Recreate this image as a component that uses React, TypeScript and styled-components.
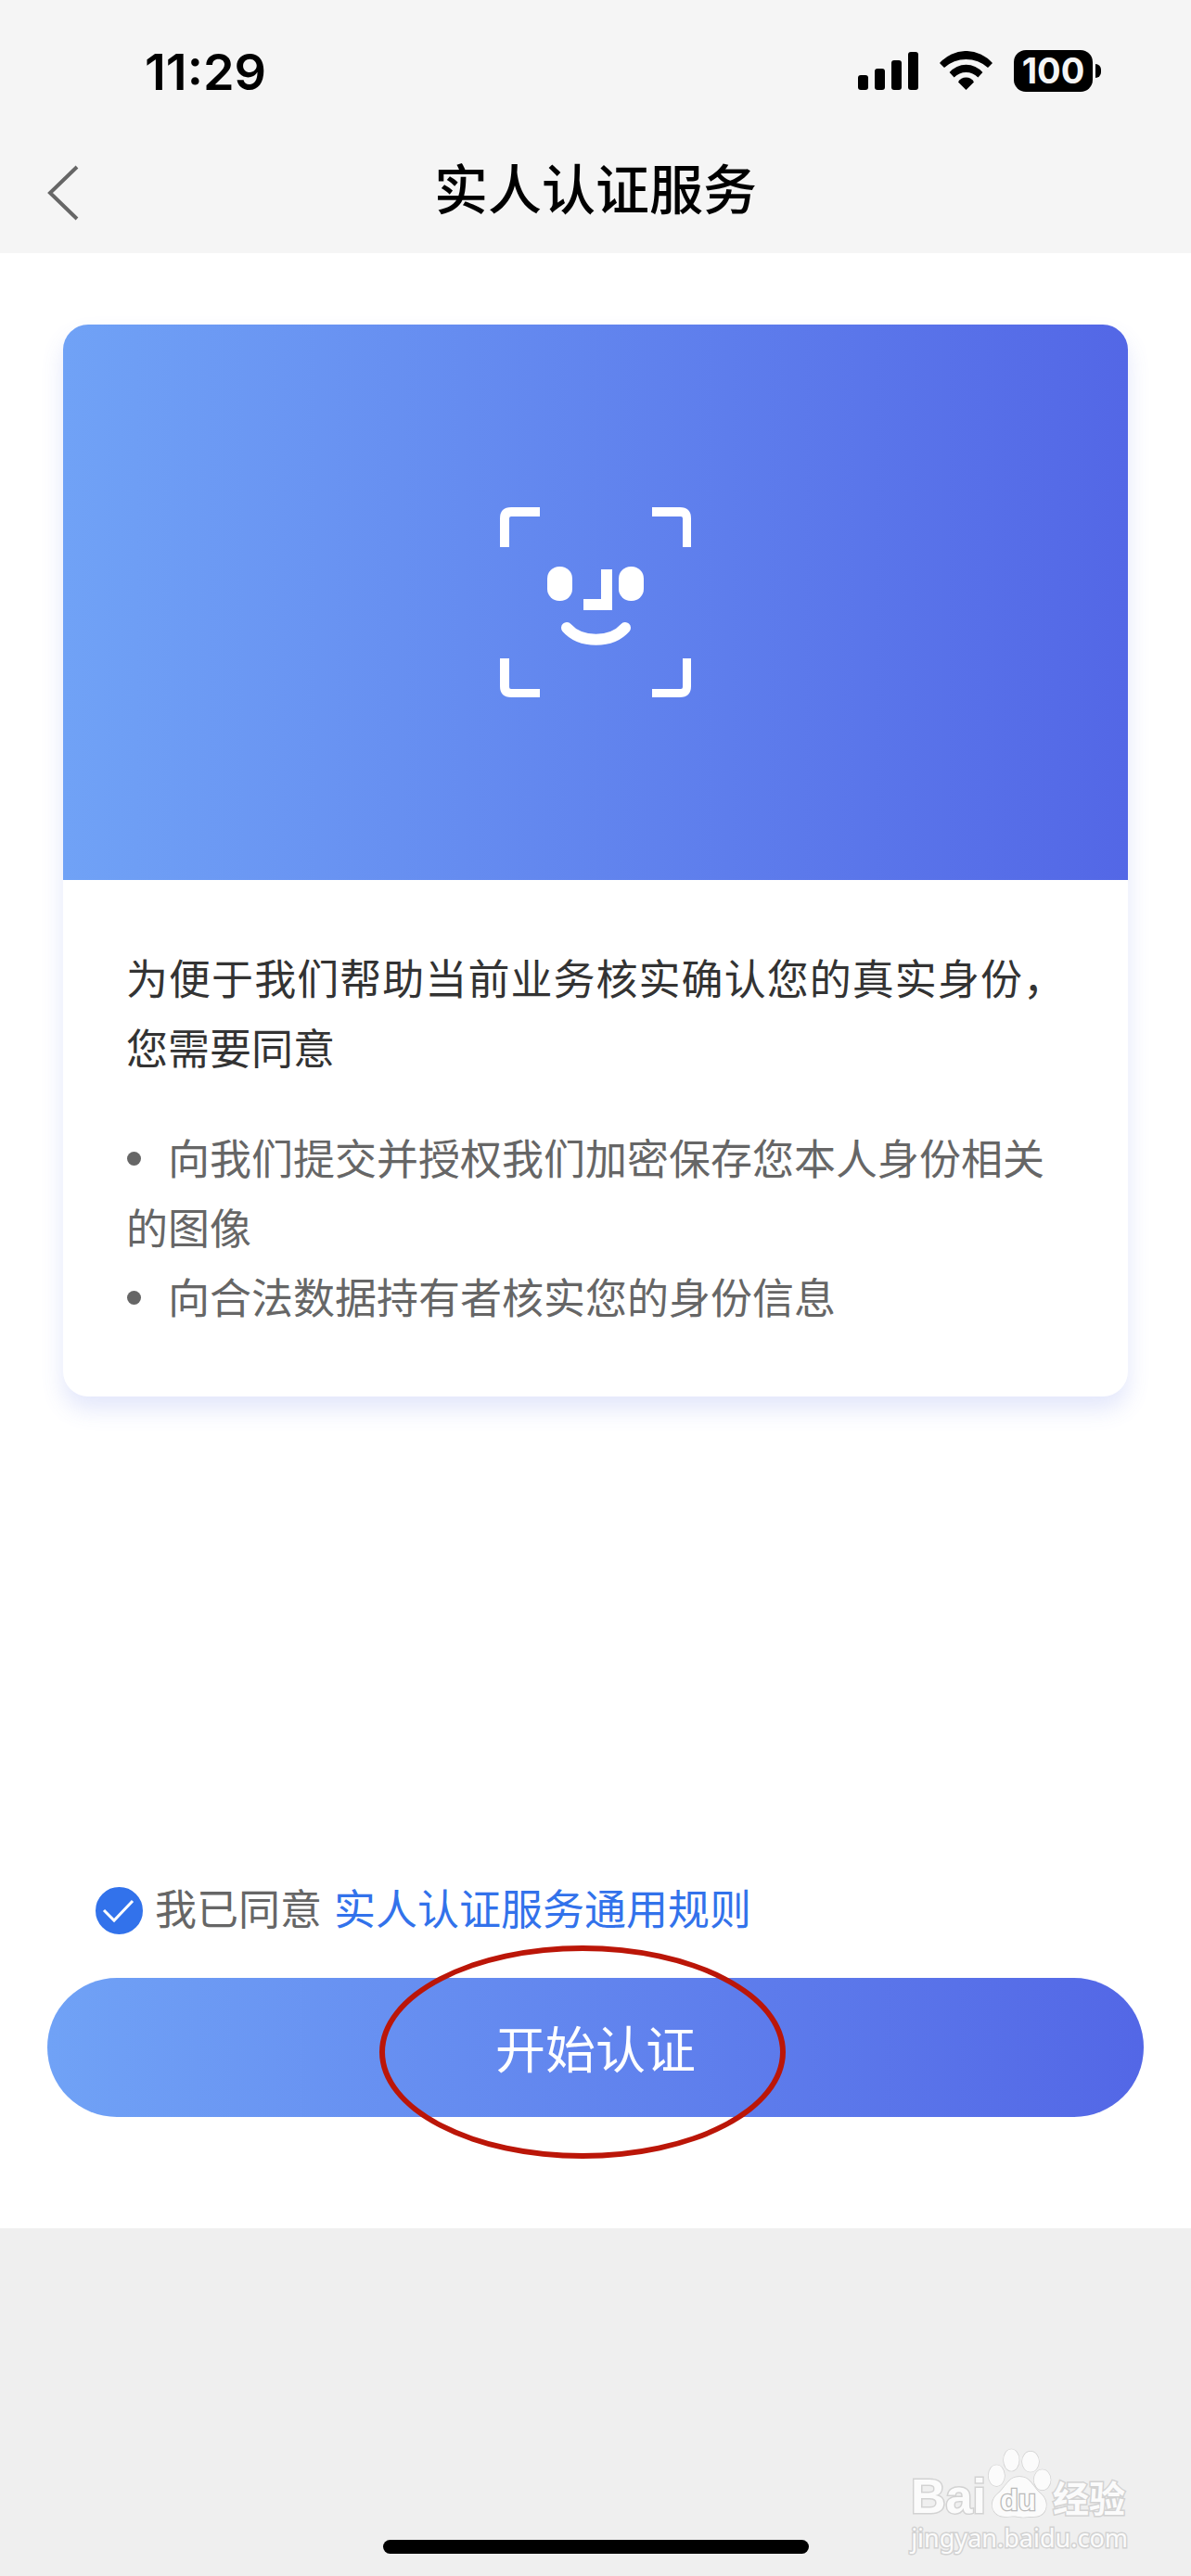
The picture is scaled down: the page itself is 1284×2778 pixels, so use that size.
import React, { useState } from "react";
import styled, { createGlobalStyle } from "styled-components";

const latin = `Inter, "Liberation Sans", "Noto Sans CJK SC", sans-serif`;
const cjk = `"Noto Sans CJK SC", "Liberation Sans", sans-serif`;
const brand = "linear-gradient(90deg, #70a2f6 0%, #5367e6 100%)";

const GlobalStyle = createGlobalStyle`
  *, *::before, *::after { box-sizing: border-box; }
  body { margin: 0; background: #efefef; font-family: ${cjk}; }
`;

const Screen = styled.div`
  position: relative;
  display: flex;
  flex-direction: column;
  min-height: 100vh;
`;

const Header = styled.header`
  background: #f5f5f5;
  color: #000;
`;

const StatusBar = styled.div`
  display: flex;
  align-items: center;
  justify-content: space-between;
  padding: 42px 97px 0 156px;
`;

const Clock = styled.time`
  padding-top: 4px;
  font: 600 54px/64px ${latin};
`;

const Indicators = styled.div`
  display: flex;
  align-items: center;
  gap: 23px;
`;

const Battery = styled.div`
  display: flex;
  align-items: center;
  gap: 3px;
`;

const BatteryBody = styled.span`
  width: 85px;
  border-radius: 13px;
  background: #000;
  color: #f5f5f5;
  text-align: center;
  font: 700 38px/45px ${latin};
`;

const BatteryTip = styled.span`
  width: 6px;
  height: 15px;
  border-radius: 0 6px 6px 0;
  background: #000;
`;

const NavBar = styled.nav`
  display: grid;
  grid-template-columns: 1fr auto 1fr;
  align-items: center;
  height: 163px;
  padding: 32px 48px 0;
`;

const BackButton = styled.button`
  display: flex;
  justify-self: start;
  padding: 0;
  border: 0;
  background: none;
  cursor: pointer;
`;

const Title = styled.h1`
  margin: 0;
  padding-bottom: 14px;
  font: 500 58px/80px ${cjk};
`;

const Main = styled.main`
  display: flex;
  flex-direction: column;
  gap: 520px;
  padding: 77px 51px 120px;
  background: #fff;
`;

const Card = styled.section`
  margin: 0 17px;
  border-radius: 27px;
  overflow: hidden;
  background: #fff;
  box-shadow: 0 14px 24px rgba(83, 103, 230, 0.16);
`;

const Banner = styled.div`
  display: grid;
  place-items: center;
  height: 599px;
  background: ${brand};
`;

const CardBody = styled.div`
  display: grid;
  gap: 44px;
  padding: 67px 68px 71px;
  font-size: 45px;
  line-height: 75px;
`;

const Intro = styled.p`
  margin: 0;
  color: #333;
  text-align: justify;
`;

const Terms = styled.ul`
  margin: 0;
  padding: 0;
  list-style: none;
  color: #666;
`;

const Term = styled.li`
  &::before {
    content: "";
    display: inline-block;
    width: 15px;
    height: 15px;
    margin: 0 29px 0 1px;
    border-radius: 50%;
    background: #666;
    vertical-align: 10px;
  }
`;

const Actions = styled.div`
  display: grid;
  gap: 46px;
`;

const Agreement = styled.div`
  display: flex;
  align-items: center;
  gap: 13px;
  padding-left: 52px;
  color: #666;
  font-size: 45px;
  line-height: 61px;
`;

const AgreeLabel = styled.label`
  display: flex;
  align-items: center;
  gap: 13px;
`;

const CheckHolder = styled.span`
  display: grid;
  padding-top: 8px;
  > * { grid-area: 1 / 1; }
  > svg { pointer-events: none; }
`;

const Check = styled.input`
  appearance: none;
  width: 51px;
  height: 51px;
  margin: 0;
  border: 2px solid #3272eb;
  border-radius: 50%;
  &:checked { background: #3272eb; }
`;

const RulesLink = styled.a`
  color: #3272eb;
  text-decoration: none;
`;

const StartButton = styled.button`
  position: relative;
  width: 100%;
  height: 150px;
  padding: 0;
  border: 0;
  border-radius: 75px;
  background: ${brand};
  color: #fff;
  font: 400 54px/80px ${cjk};
  cursor: pointer;
`;

const Marker = styled.span`
  position: absolute;
  top: 50%;
  left: 50%;
  width: 438px;
  height: 230px;
  margin: -110px 0 0 -233px;
  border: 6px solid #bb1608;
  border-radius: 50%;
  pointer-events: none;
`;

const Footer = styled.footer`
  display: flex;
  flex: 1;
  flex-direction: column;
  align-items: center;
  justify-content: flex-end;
  min-height: 200px;
  padding-bottom: 24px;
  background: #efefef;
`;

const HomeIndicator = styled.span`
  width: 459px;
  height: 15px;
  border-radius: 8px;
  background: #000;
`;

const Watermark = styled.div`
  position: absolute;
  right: 68px;
  bottom: 24px;
  display: grid;
  gap: 4px;
  justify-items: end;
  color: #fbfbfb;
  paint-order: stroke fill;
  -webkit-text-stroke: 3px #d2d2d2;
`;

const WatermarkRow = styled.div`
  display: flex;
  align-items: flex-end;
  gap: 1px;
  padding-right: 3px;
`;

const WatermarkWord = styled.span<{ $cjk?: boolean }>`
  font: ${(p) => (p.$cjk ? `700 39px/48px ${cjk}` : `700 52px/48px "Liberation Sans", sans-serif`)};
`;

const WatermarkUrl = styled.span`
  font: 400 27px/34px "Noto Sans", sans-serif;
`;

const SignalIcon = () => (
  <svg width="65" height="42" viewBox="0 0 65 42" aria-hidden="true">
    <rect x="0" y="26" width="11" height="16" rx="3" />
    <rect x="18" y="19" width="11" height="23" rx="3" />
    <rect x="36" y="10" width="11" height="32" rx="3" />
    <rect x="54" y="1" width="11" height="41" rx="3" />
  </svg>
);

const WifiIcon = () => (
  <svg width="57" height="42" viewBox="0 0 57 42" aria-hidden="true">
    <path d="M0 13A37.7 37.7 0 0 1 57 13L52 18A35 35 0 0 0 5 18Z" />
    <path d="M10.6 23A23.5 23.5 0 0 1 46.4 23L41.4 28.6A17.7 17.7 0 0 0 15.6 28.6Z" />
    <path d="M20 33.5A9.7 9.7 0 0 1 37 33.5L28.5 42Z" />
  </svg>
);

const BackIcon = () => (
  <svg width="40" height="60" viewBox="0 0 40 60" fill="none" aria-hidden="true">
    <path d="M35 2L6 30L35 58" stroke="#666" strokeWidth="4" />
  </svg>
);

const FaceIcon = () => (
  <svg width="206" height="205" viewBox="0 0 206 205" fill="#fff" aria-hidden="true">
    <path d="M0 43V12Q0 0 12 0H43V10H12Q10 10 10 12V43Z" />
    <path d="M206 43V12Q206 0 194 0H164V10H195Q197 10 197 12V43Z" />
    <path d="M0 163V193Q0 205 12 205H43V196H12Q10 196 10 194V163Z" />
    <path d="M206 163V193Q206 205 194 205H164V196H195Q197 196 197 194V163Z" />
    <rect x="51" y="64" width="27" height="37" rx="13" />
    <rect x="128" y="64" width="27" height="37" rx="13" />
    <path d="M109 67H121V111H90V99H109Z" />
    <path d="M72 130C87 147 120 147 135 130" fill="none" stroke="#fff" strokeWidth="12" strokeLinecap="round" />
  </svg>
);

const CheckIcon = () => (
  <svg width="51" height="51" viewBox="0 0 51 51" fill="none" aria-hidden="true">
    <path d="M9 25L20 36L40 15" stroke="#fff" strokeWidth="3" />
  </svg>
);

const PawLabel = styled.text`
  font: 700 94px "Liberation Sans", sans-serif;
  -webkit-text-stroke: 6px #c9c9c9;
`;

const PawIcon = () => (
  <svg width="70" height="76" viewBox="370 119 210 228" fill="#fbfbfb" stroke="#cfcfcf" strokeWidth="4" aria-hidden="true">
    <ellipse cx="401" cy="208" rx="26" ry="34" />
    <ellipse cx="449" cy="158" rx="25" ry="35" />
    <ellipse cx="511" cy="163" rx="27" ry="33" />
    <ellipse cx="549" cy="222" rx="27" ry="33" />
    <path d="M475 212C438 212 432 246 406 266C374 292 384 341 430 341C452 341 458 337 475 342C492 345 500 341 522 341C566 341 574 292 543 266C518 246 512 212 475 212Z" />
    <PawLabel x="471" y="321" textAnchor="middle" stroke="#b9b9b9" strokeWidth="8">
      du
    </PawLabel>
  </svg>
);

export default function App() {
  const [agreed, setAgreed] = useState(true);

  return (
    <Screen>
      <GlobalStyle />
      <Header>
        <StatusBar>
          <Clock>11:29</Clock>
          <Indicators>
            <SignalIcon />
            <WifiIcon />
            <Battery>
              <BatteryBody>100</BatteryBody>
              <BatteryTip />
            </Battery>
          </Indicators>
        </StatusBar>
        <NavBar>
          <BackButton aria-label="返回">
            <BackIcon />
          </BackButton>
          <Title>实人认证服务</Title>
        </NavBar>
      </Header>
      <Main>
        <Card>
          <Banner>
            <FaceIcon />
          </Banner>
          <CardBody>
            <Intro>为便于我们帮助当前业务核实确认您的真实身份，您需要同意</Intro>
            <Terms>
              <Term>向我们提交并授权我们加密保存您本人身份相关的图像</Term>
              <Term>向合法数据持有者核实您的身份信息</Term>
            </Terms>
          </CardBody>
        </Card>
        <Actions>
          <Agreement>
            <AgreeLabel>
              <CheckHolder>
                <Check type="checkbox" checked={agreed} onChange={(e) => setAgreed(e.target.checked)} />
                <CheckIcon />
              </CheckHolder>
              我已同意
            </AgreeLabel>
            <RulesLink href="#rules">实人认证服务通用规则</RulesLink>
          </Agreement>
          <StartButton disabled={!agreed}>
            开始认证
            <Marker />
          </StartButton>
        </Actions>
      </Main>
      <Footer>
        <HomeIndicator />
      </Footer>
      <Watermark>
        <WatermarkRow>
          <WatermarkWord>Bai</WatermarkWord>
          <PawIcon />
          <WatermarkWord $cjk>经验</WatermarkWord>
        </WatermarkRow>
        <WatermarkUrl>jingyan.baidu.com</WatermarkUrl>
      </Watermark>
    </Screen>
  );
}
